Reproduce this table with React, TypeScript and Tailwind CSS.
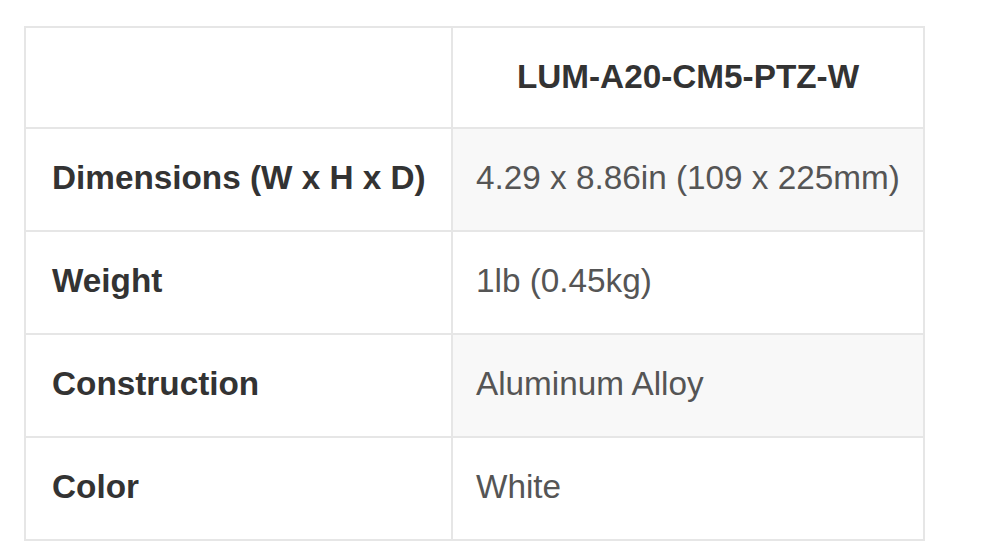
const rows = [
  { label: "Dimensions (W x H x D)", value: "4.29 x 8.86in (109 x 225mm)" },
  { label: "Weight", value: "1lb (0.45kg)" },
  { label: "Construction", value: "Aluminum Alloy" },
  { label: "Color", value: "White" },
]

export default function App() {
  return (
    <div className="min-h-screen bg-white pl-[24px] pt-[26px] font-['Liberation_Sans',Arial,sans-serif]">
      <table className="w-[901px] table-fixed border-collapse border-2 border-[#e6e6e6] text-[33.3px] leading-[1.2]">
        <colgroup>
          <col className="w-[427px]" />
          <col />
        </colgroup>
        <thead>
          <tr className="h-[101px]">
            <th className="border-2 border-[#e6e6e6] bg-white" />
            <th className="border-2 border-[#e6e6e6] bg-white pb-[2px] text-center font-bold text-[#333]">
              LUM-A20-CM5-PTZ-W
            </th>
          </tr>
        </thead>
        <tbody>
          {rows.map((row, i) => (
            <tr key={row.label} className="h-[103px]">
              <td className="border-2 border-[#e6e6e6] bg-white pb-[3px] pl-[26px] font-bold text-[#333]">
                {row.label}
              </td>
              <td
                className={`border-2 border-[#e6e6e6] pb-[3px] pl-[23px] text-[#555] ${
                  i % 2 === 0 ? "bg-[#f8f8f8]" : "bg-white"
                }`}
              >
                {row.value}
              </td>
            </tr>
          ))}
        </tbody>
      </table>
    </div>
  )
}
